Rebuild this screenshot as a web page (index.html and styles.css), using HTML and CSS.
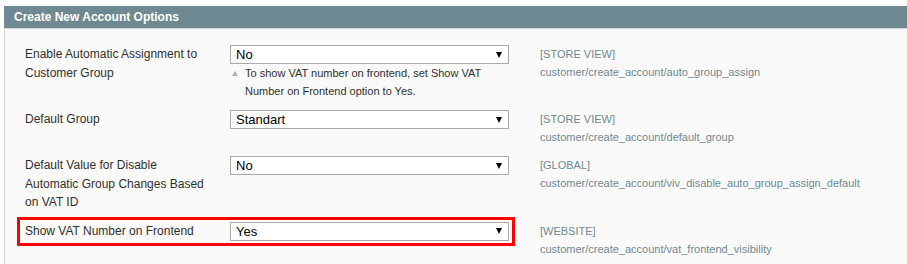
FILE: index.html
```html
<!DOCTYPE html>
<html>

<head>
  <title>Create New Account Options</title>
  <link rel="stylesheet" href="styles.css">
</head>

<body class="main">
  <div class="entry-edit">
    <div class="entry-edit-head">
      <h4>Create New Account Options</h4>
    </div>
    <div class="fieldset">
      <div class="form-row">
        <div class="cells">
          <div class="label">Enable Automatic Assignment to Customer Group</div>
          <div class="value">
            <div class="select"><span>No</span><span class="arrow"></span></div>
            <div class="note"><span class="note-mark"></span><p>To show VAT number on frontend, set Show VAT Number on Frontend option to Yes.</p></div>
          </div>
        </div>
        <div class="scope-label">[STORE VIEW]<br>customer/create_account/auto_group_assign</div>
      </div>

      <div class="form-row">
        <div class="cells">
          <div class="label">Default Group</div>
          <div class="value">
            <div class="select"><span>Standart</span><span class="arrow"></span></div>
          </div>
        </div>
        <div class="scope-label">[STORE VIEW]<br>customer/create_account/default_group</div>
      </div>

      <div class="form-row">
        <div class="cells">
          <div class="label">Default Value for Disable Automatic Group Changes Based on VAT ID</div>
          <div class="value">
            <div class="select"><span>No</span><span class="arrow"></span></div>
          </div>
        </div>
        <div class="scope-label">[GLOBAL]<br>customer/create_account/viv_disable_auto_group_assign_default</div>
      </div>

      <div class="form-row">
        <div class="cells marked">
          <div class="label">Show VAT Number on Frontend</div>
          <div class="value">
            <div class="select"><span>Yes</span><span class="arrow"></span></div>
          </div>
        </div>
        <div class="scope-label">[WEBSITE]<br>customer/create_account/vat_frontend_visibility</div>
      </div>
    </div>
  </div>
</body>

</html>
```

FILE: styles.css
```css
body {
  margin: 0;
  overflow: hidden;
}

.main {
  background: #fff;
  font-family: "Liberation Sans", Arial, sans-serif;
  font-size: 12px;
  color: #2f2f2f;
}

.entry-edit {
  margin: 6px 0 0 4px;
}

.entry-edit-head {
  background: #6f8992;
  height: 22px;
  padding: 0 10px;
}

.entry-edit-head h4 {
  margin: 0;
  color: #fff;
  font-size: 12px;
  font-weight: bold;
  line-height: 22px;
}

.fieldset {
  background: #fafafa;
  border-top: 1px solid #d6d6d6;
  border-left: 1px solid #d6d6d6;
  padding: 11px 0 20px 12px;
}

.form-row {
  display: flex;
  align-items: flex-start;
}

.cells {
  display: flex;
  align-items: flex-start;
  border: 3px solid transparent;
  padding: 2px 3px 2px 5px;
}

.cells.marked {
  border-color: #ff0000;
}

.label {
  width: 185px;
  padding-right: 20px;
  line-height: 18.5px;
}

.value {
  width: 279px;
}

.select {
  display: flex;
  justify-content: space-between;
  align-items: center;
  height: 17px;
  border: 1px solid #aaa;
  background: #fff;
  padding: 0 6px 0 5px;
  color: #000;
  font-size: 13px;
}

.arrow {
  width: 0;
  height: 0;
  border-left: 3.5px solid transparent;
  border-right: 3.5px solid transparent;
  border-top: 6px solid #000;
}

.note {
  display: flex;
  align-items: flex-start;
  font-size: 11px;
  line-height: 18px;
}

.note-mark {
  flex: none;
  width: 0;
  height: 0;
  margin: 7px 7px 0 2px;
  border-left: 3px solid transparent;
  border-right: 3px solid transparent;
  border-bottom: 5px solid #a7b1b6;
}

.note p {
  margin: 0;
}

.scope-label {
  padding: 5px 0 5px 25px;
  color: #6f8992;
  font-size: 11px;
  line-height: 18px;
}
```
